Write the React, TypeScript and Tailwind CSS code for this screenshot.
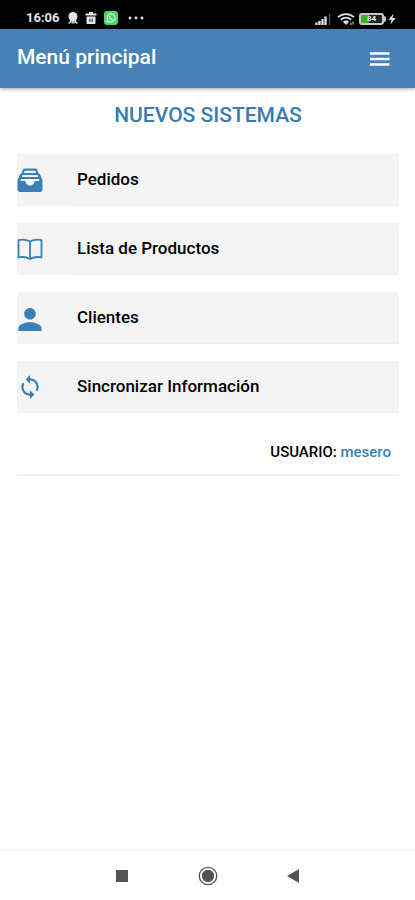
import type { ReactNode } from "react";

const FilingIcon = () => (
  <svg viewBox="0 0 26 26" className="h-[26px] w-[26px]" aria-hidden="true">
    <path
      fill="currentColor"
      fillRule="evenodd"
      d="M7.800 1.500h10.400c1 0 1.700.5 2 1.400l1.300 3.400c.9.300 1.500.9 1.900 1.800l1.800 4.600c.2.500.3 1 .3 1.500V22.500c0 1.500-1 2.500-2.500 2.500H3c-1.500 0-2.500-1-2.500-2.500v-8.300c0-.5.1-1 .3-1.500l1.800-4.600c.4-.9 1-1.500 1.900-1.800l1.300-3.400c.3-.9 1-1.400 2-1.400zM7.700 3.700l-.8 2.200h12.200l-.8-2.200zM5.600 8l-.8 2h16.400L20.400 8zM4.200 12l-.8 2h4.800c.3 2.600 2.300 4.500 4.800 4.500s4.500-1.900 4.800-4.500h4.800l-.8-2z"
    />
  </svg>
);

const BookIcon = () => (
  <svg viewBox="0 0 26 26" className="h-[26px] w-[26px]" aria-hidden="true">
    <path
      fill="none"
      stroke="currentColor"
      strokeWidth="1.800"
      strokeLinejoin="round"
      d="M13 5.500C9.500 3.700 5 3.400 1.500 4.100v17.300c3.500-.7 8-.4 11.500 1.600 3.500-2 8-2.300 11.500-1.600V4.100C21 3.400 16.500 3.700 13 5.500zM13 5.500v17.500"
    />
  </svg>
);

const PersonIcon = () => (
  <svg viewBox="3 2 18 18" className="h-[26px] w-[26px]" aria-hidden="true">
    <path
      fill="currentColor"
      d="M12 12c2.210 0 4-1.790 4-4s-1.790-4-4-4-4 1.790-4 4 1.790 4 4 4zm0 2c-2.670 0-8 1.340-8 4v2h16v-2c0-2.660-5.330-4-8-4z"
    />
  </svg>
);

const SyncIcon = () => (
  <svg viewBox="0 0 24 24" className="h-[26px] w-[26px]" aria-hidden="true">
    <path
      fill="currentColor"
      d="M12 4V1L8 5l4 4V6c3.310 0 6 2.690 6 6 0 1.010-.25 1.970-.7 2.800l1.460 1.460C19.540 15.030 20 13.570 20 12c0-4.420-3.580-8-8-8zm0 14c-3.310 0-6-2.690-6-6 0-1.010.25-1.970.7-2.800L5.240 7.740C4.460 8.970 4 10.430 4 12c0 4.420 3.580 8 8 8v3l4-4-4-4v3z"
    />
  </svg>
);

const StatusBar = () => (
  <div className="flex h-[29px] items-end justify-between bg-black pr-[19px] pb-[3px] pl-[26px] text-[#e4e4e4]">
    <div className="flex items-center">
      <span className="w-10 text-[13px] leading-4 font-bold">16:06</span>
      <svg viewBox="0 0 14 14" className="h-3.5 w-3.5" aria-hidden="true">
        <circle cx="7" cy="5.500" r="4.500" fill="currentColor" />
        <path
          d="M4.500 8.500v2.500l-2 1.500M9.500 8.500v2.500l2 1.500M6.200 9v3.500M7.900 9v3.500"
          fill="none"
          stroke="currentColor"
          strokeWidth="1.400"
        />
      </svg>
      <svg viewBox="0 0 14 14" className="ml-1 h-3.5 w-3.5" aria-hidden="true">
        <path
          fill="currentColor"
          fillRule="evenodd"
          d="M5 1h4v1.500h3.500v2h-11v-2H5zM2.500 5.500h9V12c0 .6-.4 1-1 1h-7c-.6 0-1-.4-1-1zm3 2v3.500h.8V7.500zm2.300 0v3.500h.8V7.500z"
        />
      </svg>
      <svg viewBox="0 0 14 14" className="ml-1.5 h-3.5 w-3.5" aria-hidden="true">
        <rect width="14" height="14" rx="3" fill="#48d568" />
        <path
          d="M3 11l.6-2.200A4 4 0 1 1 5.200 10.400z"
          fill="none"
          stroke="#d8f8df"
          strokeWidth="1.100"
        />
        <path
          d="M5.400 5.200c.2 2 1.400 3.200 3.400 3.500"
          fill="none"
          stroke="#d8f8df"
          strokeWidth="1.300"
        />
      </svg>
      <svg viewBox="0 0 16 4" className="ml-2.5 h-1 w-4" aria-hidden="true">
        <circle cx="2" cy="2" r="1.400" fill="currentColor" />
        <circle cx="8" cy="2" r="1.400" fill="currentColor" />
        <circle cx="14" cy="2" r="1.400" fill="currentColor" />
      </svg>
    </div>

    <div className="flex items-center">
      <svg viewBox="0 0 16 14" className="h-3.5 w-4" aria-hidden="true">
        <path
          d="M1.500 13v-2.500M4.500 13V9M7.500 13V7M10.500 13V4.500"
          stroke="currentColor"
          strokeWidth="2.300"
        />
        <path d="M14.500 13V2" stroke="#555555" strokeWidth="1.300" />
      </svg>
      <svg viewBox="0 0 18 14" className="ml-1.5 h-3.5 w-[18px]" aria-hidden="true">
        <path
          d="M1 5.200C5.500 1 12.500 1 17 5.200M3.800 7.800c3-2.800 7.400-2.800 10.400 0"
          fill="none"
          stroke="currentColor"
          strokeWidth="1.700"
        />
        <path d="M5.800 9.600c1.800-1.500 4.600-1.500 6.400 0L9 13z" fill="currentColor" />
        <path d="M14 10.500V13M16 9.500v3" stroke="currentColor" />
      </svg>
      <div className="ml-1 flex items-center">
        <div className="flex h-3 w-[25px] items-center justify-center rounded-[3px] border-2 border-[#c8c8c8] bg-linear-to-r from-[#3fae1d] from-40% to-[#222222] to-40% text-[8px] leading-none font-bold">
          84
        </div>
        <div className="h-1.5 w-0.5 rounded-r-sm bg-[#c8c8c8]" />
      </div>
      <svg viewBox="0 0 8 12" className="ml-0.5 h-3 w-2" aria-hidden="true">
        <path d="M5.500 0.500L0.500 6.800h3L2.500 11.500 7.500 5h-3z" fill="currentColor" />
      </svg>
    </div>
  </div>
);

const AppHeader = () => (
  <header className="z-10 flex h-[59px] items-center justify-between bg-[#4682b4] pr-6 pl-[17px] text-white shadow-[0_1px_4px_rgba(0,0,0,0.35)]">
    <h1 className="pb-1 text-[21px] leading-7 font-medium">Menú principal</h1>
    <button type="button" aria-label="Abrir menú">
      <svg viewBox="0 0 22 16" className="h-4 w-[22px]" aria-hidden="true">
        <path
          d="M1 2.500h19.500M1 8h19.500M1 13.500h19.500"
          stroke="currentColor"
          strokeWidth="2.400"
        />
      </svg>
    </button>
  </header>
);

interface MenuItem {
  label: string;
  icon: ReactNode;
}

const MENU_ITEMS: MenuItem[] = [
  { label: "Pedidos", icon: <FilingIcon /> },
  { label: "Lista de Productos", icon: <BookIcon /> },
  { label: "Clientes", icon: <PersonIcon /> },
  { label: "Sincronizar Información", icon: <SyncIcon /> },
];

const SystemNav = () => (
  <nav className="flex h-[50px] items-center justify-center gap-[66px] border-t border-[#f1f1f1] text-[#555555]">
    <button type="button" aria-label="Recientes">
      <svg viewBox="0 0 20 20" className="h-5 w-5" aria-hidden="true">
        <path d="M4 4h12v12H4z" fill="currentColor" />
      </svg>
    </button>
    <button type="button" aria-label="Inicio">
      <svg viewBox="0 0 20 20" className="h-5 w-5" aria-hidden="true">
        <circle
          cx="10"
          cy="10"
          r="8.700"
          fill="none"
          stroke="currentColor"
          strokeWidth="1.300"
        />
        <circle cx="10" cy="10" r="6.200" fill="currentColor" />
      </svg>
    </button>
    <button type="button" aria-label="Atrás">
      <svg viewBox="0 0 20 20" className="h-5 w-5" aria-hidden="true">
        <path d="M3 10l12-7v14z" fill="currentColor" />
      </svg>
    </button>
  </nav>
);

export default function App() {
  return (
    <div className="flex min-h-screen flex-col bg-white font-[Roboto,sans-serif] text-black">
      <StatusBar />
      <AppHeader />

      <main className="flex-1 pr-4 pl-[17px]">
        <h2 className="pt-[13px] text-center text-[21px] leading-7 font-medium text-[#3a7cb0]">
          NUEVOS SISTEMAS
        </h2>

        <ul className="mt-[25px] flex flex-col gap-[17px]">
          {MENU_ITEMS.map((item) => (
            <li key={item.label}>
              <button
                type="button"
                className="flex h-[52px] w-full items-center rounded-xs bg-[#f4f4f4] text-left"
              >
                <span className="w-[60px] text-[#3a7fb5]">{item.icon}</span>
                <span className="flex h-full flex-1 items-center border-b border-[#eeeeee] text-[17px] font-medium">
                  {item.label}
                </span>
              </button>
            </li>
          ))}
        </ul>

        <p className="mt-[29px] border-b-2 border-[#eeeeee] pr-2 pb-3 text-right text-[15px] leading-5 font-medium">
          USUARIO: <span className="text-[#3a7fb5]">mesero</span>
        </p>
      </main>

      <SystemNav />
    </div>
  );
}
